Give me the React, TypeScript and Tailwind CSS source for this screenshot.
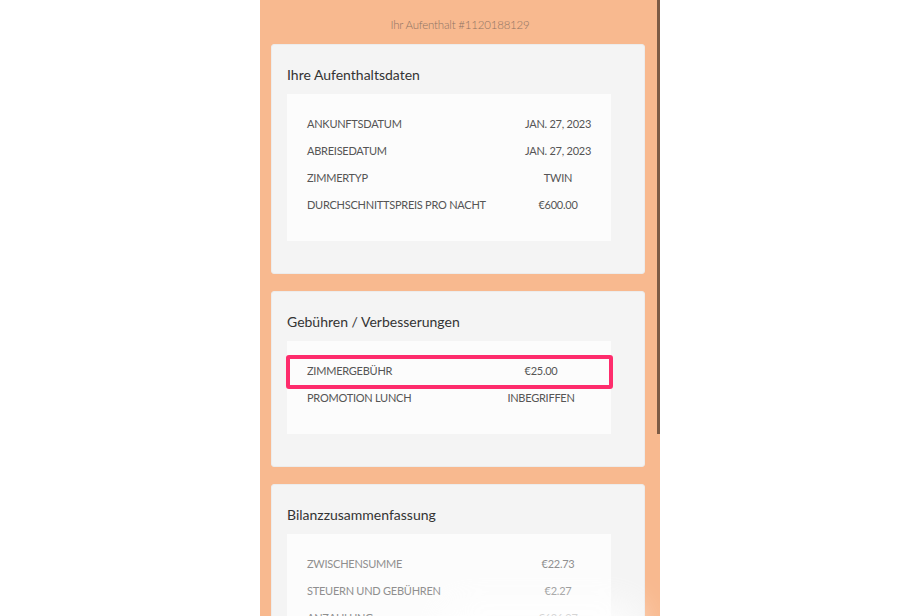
const stay = [
  ["ANKUNFTSDATUM", "JAN. 27, 2023"],
  ["ABREISEDATUM", "JAN. 27, 2023"],
  ["ZIMMERTYP", "TWIN"],
  ["DURCHSCHNITTSPREIS PRO NACHT", "€600.00"],
];

const fees = [
  ["ZIMMERGEBÜHR", "€25.00"],
  ["PROMOTION LUNCH", "INBEGRIFFEN"],
];

const balance = [
  ["ZWISCHENSUMME", "€22.73"],
  ["STEUERN UND GEBÜHREN", "€2.27"],
  ["ANZAHLUNG", "€626.97"],
];

function Card({ title, children, last }: { title: string; children: React.ReactNode; last?: boolean }) {
  return (
    <section className={`mx-[11px] rounded-[3px] border border-[#ececec] bg-[#f4f4f4] pl-[15px] pt-[20px] ${last ? "" : "pb-[32px]"}`}>
      <h2 className="text-[14px] leading-[20px] text-[#333]">{title}</h2>
      <div className="mt-[9px] w-[324px] bg-[#fcfcfc] pl-[20px] pt-[17px] pb-[22px]">{children}</div>
    </section>
  );
}

export default function App() {
  return (
    <div className="flex h-[616px] w-full justify-center overflow-hidden bg-white" style={{ fontFamily: "Lato, 'Open Sans', sans-serif" }}>
      <div className="relative w-[400px] bg-[#f8b98f]">
        {/* scrollbar */}
        <div className="absolute right-0 top-0 h-[434px] w-[3px] bg-[#7d5b45]" />

        <div className="pt-[17px] pb-[11px] text-center text-[11.5px] font-light leading-[16px] tracking-[-0.2px] text-[#8f7464]">Ihr Aufenthalt #1120188129</div>

        <div className="flex flex-col gap-[17px] pr-[4px]">
          <Card title="Ihre Aufenthaltsdaten">
            {stay.map(([k, v]) => (
              <div key={k} className="grid h-[27px] grid-cols-[1fr_106px] items-center text-[11px] tracking-[-0.25px] text-[#555]">
                <span>{k}</span>
                <span className="text-center">{v}</span>
              </div>
            ))}
          </Card>

          <Card title="Gebühren / Verbesserungen">
            {fees.map(([k, v], i) => (
              <div key={k} className="relative grid h-[27px] grid-cols-[1fr_140px] items-center text-[11px] tracking-[-0.25px] text-[#555]">
                {i === 0 && <span className="absolute -left-[21px] -right-[2px] -top-[3.5px] -bottom-[3.5px] rounded-[3px] border-4 border-[#fe2c6c]" />}
                <span>{k}</span>
                <span className="text-center">{v}</span>
              </div>
            ))}
          </Card>

          <Card title="Bilanzzusammenfassung" last>
            {balance.map(([k, v]) => (
              <div key={k} className="grid h-[27px] grid-cols-[1fr_106px] items-center text-[11px] tracking-[-0.25px] text-[#8f8f8f]">
                <span>{k}</span>
                <span className="text-center">{v}</span>
              </div>
            ))}
          </Card>
        </div>

        {/* bottom glare */}
        <div className="pointer-events-none absolute -bottom-[36px] right-[20px] h-[50px] w-[200px] rounded-full bg-white opacity-80 blur-lg" />
      </div>
    </div>
  );
}
